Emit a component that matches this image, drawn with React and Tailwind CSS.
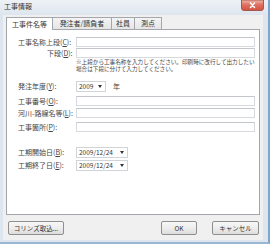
import React from "react";

const F = { fontFamily: '"Noto Sans CJK JP", "Noto Sans", sans-serif' };

function Input() {
  return <div className="h-[10px] w-[179px] bg-white border border-[#d6d9dd] border-t-[#c3c7cc]" />;
}

function Select({ value, w }) {
  return (
    <div className={`h-[11px] ${w} bg-white border border-[#d0d3d7] flex items-center justify-between pl-[2px] pr-[3px] text-[6.5px] leading-none text-[#333]`}>
      <span>{value}</span>
      <span className="w-0 h-0 border-l-[2px] border-r-[2px] border-t-[3px] border-l-transparent border-r-transparent border-t-[#333]" />
    </div>
  );
}

function Row({ label, children, mt }) {
  return (
    <div className={`flex items-center ${mt}`}>
      <div className="w-[58px] text-[7px] leading-none text-[#444] whitespace-nowrap">{label}</div>
      {children}
    </div>
  );
}

function Btn({ children, w }) {
  return (
    <div className={`${w} h-[14px] rounded-[2px] border border-[#8e8f8f] bg-gradient-to-b from-[#f7f7f7] via-[#ededed] to-[#dddddd] flex items-center justify-center text-[6.5px] leading-none text-[#333]`}>
      {children}
    </div>
  );
}

function CloseBtn() {
  return (
    <svg width="23" height="11" viewBox="0 0 23 11" className="block shrink-0">
      <defs>
        <linearGradient id="cg" x1="0" y1="0" x2="0" y2="1">
          <stop offset="0" stopColor="#f0b8ac" />
          <stop offset="0.45" stopColor="#e0705f" />
          <stop offset="1" stopColor="#d2513f" />
        </linearGradient>
      </defs>
      <path d="M0.5 0 V8 Q0.5 10.5 3 10.5 H20 Q22.5 10.5 22.5 8 V0 Z" fill="url(#cg)" stroke="#a8574c" strokeWidth="1" />
      <path d="M9.5 3 L13.5 7.5 M13.5 3 L9.5 7.5" stroke="#ffffff" strokeWidth="1.5" strokeLinecap="round" />
    </svg>
  );
}

export default function App() {
  return (
    <div style={F} className="w-[270px] h-[244px] bg-[#dde5ee] border-r-[2px] border-r-[#7fa6c8] border-b-[2px] border-b-[#9ab7d0] flex flex-col overflow-hidden">
      <div className="h-[15px] shrink-0 flex items-start justify-between pl-[4px] pr-[4px] text-[7px] leading-none text-[#333] bg-gradient-to-b from-[#eef2f6] to-[#dde5ee]">
        <span className="pt-[3px]">工事情報</span>
        <CloseBtn />
      </div>
      <div className="h-[225px] shrink-0 ml-[3px] mr-[5px] bg-[#f0f0f0] flex flex-col px-[3px] pt-[1px]">
        <div className="flex items-end h-[13px] shrink-0 text-[7px] leading-none text-[#333]">
          <div className="w-[47px] h-[13px] bg-white border border-[#a3a7ad] border-b-0 flex items-center justify-center relative z-10 -mb-px">工事件名等</div>
          <div className="w-[59px] h-[12px] bg-gradient-to-b from-[#f4f4f4] to-[#e5e5e5] border border-[#a3a7ad] border-l-0 border-b-0 flex items-center justify-center">発注者/請負者</div>
          <div className="w-[23px] h-[12px] bg-gradient-to-b from-[#f4f4f4] to-[#e5e5e5] border border-[#a3a7ad] border-l-0 border-b-0 flex items-center justify-center">社員</div>
          <div className="w-[27px] h-[12px] bg-gradient-to-b from-[#f4f4f4] to-[#e5e5e5] border border-[#a3a7ad] border-l-0 border-b-0 flex items-center justify-center">測点</div>
        </div>
        <div className="h-[186px] shrink-0 bg-white border border-[#a3a7ad] pl-[11px] pt-[7px]">
          <Row label={<span>工事名称上段(<u>C</u>):</span>}><Input /></Row>
          <Row label={<span className="pl-[29px]">下段(<u>D</u>):</span>} mt="mt-[1px]"><Input /></Row>
          <div className="ml-[58px] mt-[1px] text-[5.6px] leading-[7px] text-[#444] w-[180px]">
            ※上段から工事名称を入力してください。印刷時に改行して出力したい場合は下段に分けて入力してください。
          </div>
          <Row label={<span>発注年度(<u>Y</u>):</span>} mt="mt-[8px]">
            <Select value="2009" w="w-[30px]" />
            <span className="ml-[7px] text-[7px] leading-none text-[#444]">年</span>
          </Row>
          <Row label={<span>工事番号(<u>O</u>):</span>} mt="mt-[4px]"><Input /></Row>
          <Row label={<span>河川-路線名等(<u>L</u>):</span>} mt="mt-[2px]"><Input /></Row>
          <Row label={<span>工事箇所(<u>P</u>):</span>} mt="mt-[4px]"><Input /></Row>
          <Row label={<span>工期開始日(<u>B</u>):</span>} mt="mt-[15px]"><Select value="2009/12/24" w="w-[52px]" /></Row>
          <Row label={<span>工期終了日(<u>E</u>):</span>} mt="mt-[2px]"><Select value="2009/12/24" w="w-[52px]" /></Row>
        </div>
        <div className="flex items-center mt-[6px] pl-[2px] pr-[1px] shrink-0">
          <Btn w="w-[56px]">コリンズ取込...</Btn>
          <div className="flex-1" />
          <Btn w="w-[36px]">OK</Btn>
          <div className="w-[15px]" />
          <Btn w="w-[47px]">キャンセル</Btn>
        </div>
      </div>
    </div>
  );
}
